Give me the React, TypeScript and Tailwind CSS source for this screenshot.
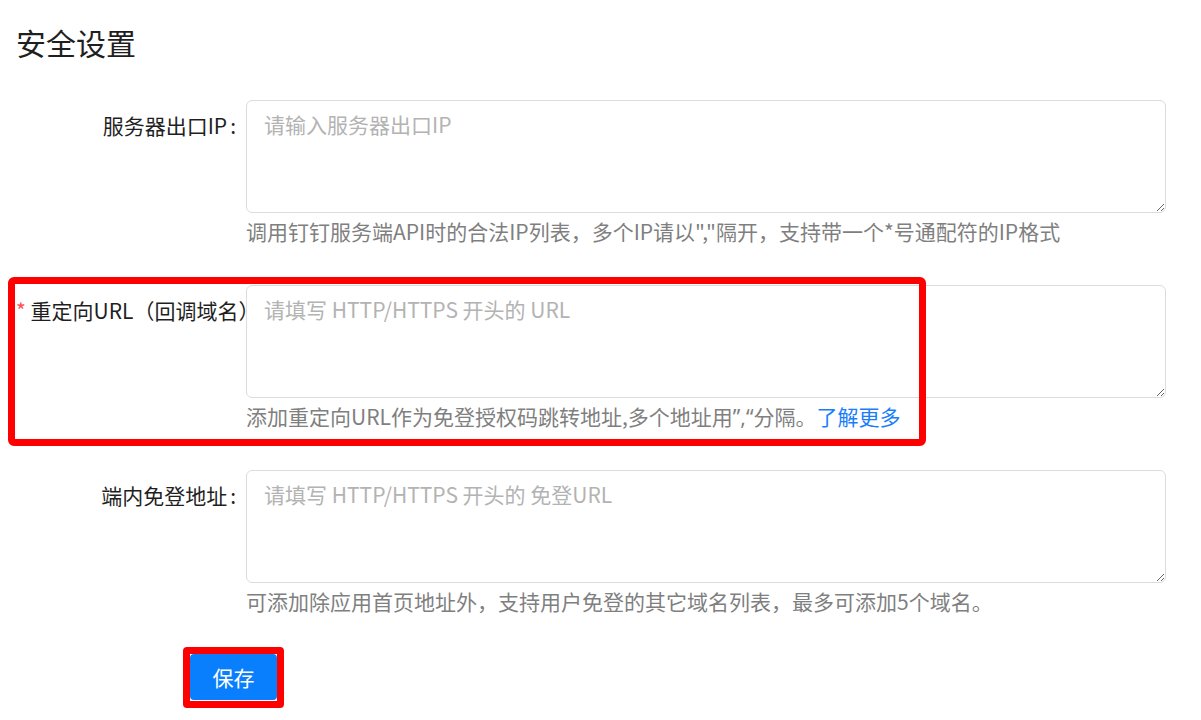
const fontStack = "font-['Noto_Sans_CJK_SC','Noto_Sans',sans-serif]";

type RowProps = {
    label: React.ReactNode;
    placeholder: string;
    hint: React.ReactNode;
};

const FormRow = ({ label, placeholder, hint }: RowProps) => {
    return (
        <div className="flex flex-row mb-[39px]">
            <div className="w-[230px] shrink-0 pr-[10px] pt-[10px] text-right text-[21px] leading-[30px] text-[#1f1f1f] whitespace-nowrap">
                {label}
            </div>
            <div className="w-[920px] flex flex-col">
                <textarea
                    placeholder={placeholder}
                    className="w-full h-[113px] border border-[#dcdcdc] rounded-[6px] px-[17px] pt-[8px] text-[21px] leading-[30px] text-[#1f1f1f] placeholder:text-[#b3b3b3] outline-none"
                />
                <div className="mt-[3px] h-[30px] overflow-hidden text-[21px] leading-[30px] text-[#7f7f7f] whitespace-nowrap">
                    {hint}
                </div>
            </div>
        </div>
    );
};

const App = () => {
    return (
        <div className={`relative w-[1201px] min-h-[720px] bg-white pl-4 pt-5 ${fontStack}`}>
            <h1 className="text-[30px] leading-[45px] font-normal text-[#1f1f1f]">
                安全设置
            </h1>

            <div className="mt-[35px] flex flex-col">
                <FormRow
                    label={
                        <>
                            服务器出口IP<span className="ml-[3px]">:</span>
                        </>
                    }
                    placeholder="请输入服务器出口IP"
                    hint={<>调用钉钉服务端API时的合法IP列表，多个IP请以","隔开，支持带一个*号通配符的IP格式</>}
                />
                <FormRow
                    label={
                        <div className="text-left">
                            <span className="text-[#ff4d4f]">*</span> 重定向URL（回调域名）
                        </div>
                    }
                    placeholder="请填写 HTTP/HTTPS 开头的 URL"
                    hint={
                        <>
                            添加重定向URL作为免登授权码跳转地址,多个地址用
                            <span className="font-['Noto_Sans',sans-serif] leading-[20px]">”,“</span>
                            分隔。
                            <a href="#" className="text-[#1a7efb]">
                                了解更多
                            </a>
                        </>
                    }
                />
                <FormRow
                    label={
                        <>
                            端内免登地址<span className="ml-[3px]">:</span>
                        </>
                    }
                    placeholder="请填写 HTTP/HTTPS 开头的 免登URL"
                    hint={<>可添加除应用首页地址外，支持用户免登的其它域名列表，最多可添加5个域名。</>}
                />
            </div>

            <div className="pl-[174px] mt-[-1px]">
                <button className="w-[87px] h-[46px] rounded-[4px] bg-[#0a7ffd] text-white text-[21px] leading-[30px]">
                    保存
                </button>
            </div>

            {/* red highlight frames */}
            <div className="absolute left-[8px] top-[277px] w-[918px] h-[169px] border-[7px] border-[#ff0000] rounded-[6px] pointer-events-none" />
            <div className="absolute left-[183px] top-[647px] w-[101px] h-[61px] border-[7px] border-[#ff0000] rounded-[4px] pointer-events-none" />
        </div>
    );
};

export default App;
